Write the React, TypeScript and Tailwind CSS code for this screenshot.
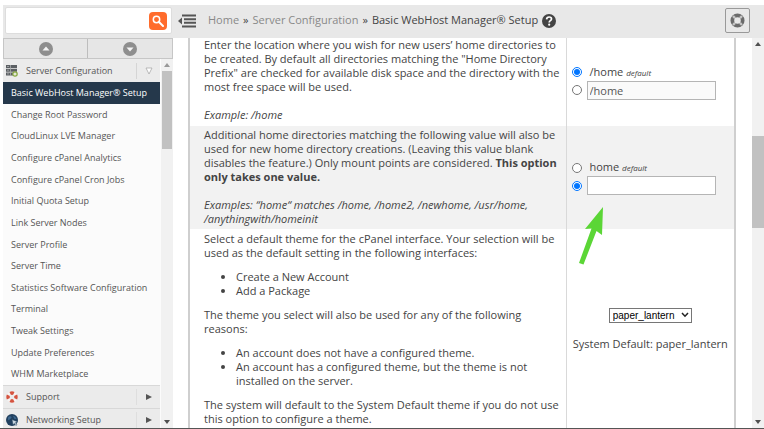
import { useState } from 'react';

const menuItems = [
  'Basic WebHost Manager® Setup',
  'Change Root Password',
  'CloudLinux LVE Manager',
  'Configure cPanel Analytics',
  'Configure cPanel Cron Jobs',
  'Initial Quota Setup',
  'Link Server Nodes',
  'Server Profile',
  'Server Time',
  'Statistics Software Configuration',
  'Terminal',
  'Tweak Settings',
  'Update Preferences',
  'WHM Marketplace',
];

function LifeRing({ className, color, gap }: { className: string; color: string; gap: string }) {
  return (
    <svg viewBox="0 0 16 16" className={className} aria-hidden="true">
      <circle cx="8" cy="8" r="5.5" fill="none" stroke={color} strokeWidth="4" />
      <path
        d="M3.2 3.2 5.4 5.4M12.8 3.2l-2.2 2.2M3.2 12.8l2.2-2.2M12.8 12.8l-2.2-2.2"
        stroke={gap}
        strokeWidth="2.6"
      />
    </svg>
  );
}

function SupportIcon() {
  return (
    <svg viewBox="0 0 12 12" className="size-3" aria-hidden="true">
      <circle cx="6" cy="6" r="4" fill="none" stroke="#f7f3f2" strokeWidth="3.6" />
      <circle
        cx="6"
        cy="6"
        r="4"
        fill="none"
        stroke="#d4533f"
        strokeWidth="3.4"
        pathLength="80"
        strokeDasharray="12 8"
        strokeDashoffset="6"
      />
    </svg>
  );
}

function ServerIcon() {
  return (
    <svg viewBox="0 0 12 12" className="size-3" aria-hidden="true">
      <path d="M0 0h11v3H0zM0 3.7h11v3H0zM0 7.4h11v3H0z" fill="#5b5f63" />
      <path d="M4.5 0v11M1 1.5h2M1 5.2h2M1 8.9h2" stroke="#a9adaf" strokeWidth=".8" />
      <circle cx="9" cy="9" r="2.2" fill="#e3e8d6" stroke="#86a83f" strokeWidth="1.2" />
    </svg>
  );
}

function GlobeIcon() {
  return (
    <svg viewBox="0 0 12 12" className="size-3" aria-hidden="true">
      <circle cx="6" cy="6" r="6" fill="#21405f" />
      <path d="M2 3.5c1.5-1.8 3-1.5 3.5-.5S4 5 3 6 2 5 2 3.5zM7 2c2 0 3 1.5 3.5 3l-2 0z" fill="#3d678e" />
      <path d="m6 5.5 5.5 2.2-2 1 1.5 2-1.2.8-1.5-2L7 11z" fill="#c9d6e0" stroke="#21405f" strokeWidth=".5" />
    </svg>
  );
}

function ScrollArrow({ down, className }: { down?: boolean; className: string }) {
  return (
    <svg viewBox="0 0 6 4" className={`h-1 w-1.5 ${className}`} aria-hidden="true">
      <path d={down ? 'M0 0h6L3 4z' : 'M0 4h6L3 0z'} fill="currentColor" />
    </svg>
  );
}

function Sidebar() {
  return (
    <nav className="flex w-[170px] shrink-0 flex-col bg-[#fbfbfb] text-[9px]">
      <div className="grid h-[21px] shrink-0 grid-cols-2 border border-[#c6c6c6] bg-[#e6e6e6]">
        <button type="button" aria-label="Collapse all" className="flex items-center justify-center border-r border-[#bdbdbd]">
          <svg viewBox="0 0 14 14" className="size-3.5">
            <circle cx="7" cy="7" r="7" fill="#8e8e8e" />
            <path d="M3.5 8.5h7L7 4.5z" fill="#f4f4f4" />
          </svg>
        </button>
        <button type="button" aria-label="Expand all" className="flex items-center justify-center">
          <svg viewBox="0 0 14 14" className="size-3.5">
            <circle cx="7" cy="7" r="7" fill="#8e8e8e" />
            <path d="M3.5 5.5h7L7 9.5z" fill="#f4f4f4" />
          </svg>
        </button>
      </div>
      <div className="flex min-h-0 flex-1">
        <div className="min-w-0 flex-1 overflow-hidden">
          <button type="button" className="flex h-[23px] w-full items-center bg-[#ebebeb] pl-[3px] text-[#555]">
            <ServerIcon />
            <span className="flex-1 pl-2 text-left">Server Configuration</span>
            <span className="flex h-4 w-6 items-center justify-center border-l border-[#d5d5d5]">
              <svg viewBox="0 0 8 8" className="size-2">
                <path d="M1 1h6L4 7z" fill="#fff" stroke="#aaa" strokeWidth=".8" />
              </svg>
            </span>
          </button>
          <ul className="grid h-[303px] auto-rows-fr whitespace-nowrap">
            {menuItems.map((item, i) => (
              <li key={item}>
                <a
                  href="#"
                  className={
                    i === 0
                      ? 'flex h-full items-center bg-[#25384b] pl-2 text-white'
                      : 'flex h-full items-center pl-2 text-[#555]'
                  }
                >
                  {item}
                </a>
              </li>
            ))}
          </ul>
          {['Support', 'Networking Setup'].map((label) => (
            <button
              key={label}
              type="button"
              className="flex h-[23px] w-full items-center border-t border-[#d8d8d8] bg-[#ebebeb] pl-[3px] text-[#555]"
            >
              {label === 'Support' ? <SupportIcon /> : <GlobeIcon />}
              <span className="flex-1 pl-2 text-left">{label}</span>
              <span className="flex h-4 w-6 items-center justify-center border-l border-[#dedede]">
                <svg viewBox="0 0 6 6" className="size-1.5">
                  <path d="M0 0v6l6-3z" fill="#555" />
                </svg>
              </span>
            </button>
          ))}
        </div>
        <div className="ml-px flex w-3 shrink-0 flex-col items-center bg-[#f1f1f1]">
          <ScrollArrow className="my-1 text-[#999]" />
          <div className="h-[78px] w-[10px] bg-[#c1c1c1]" />
          <ScrollArrow down className="mt-auto mb-1 text-[#505050]" />
        </div>
      </div>
    </nav>
  );
}

function PrefixField({ name, option, value, custom }: { name: string; option: string; value: string; custom: boolean }) {
  const [isCustom, setIsCustom] = useState(custom);
  const [text, setText] = useState(value);
  return (
    <div className="flex flex-col gap-px pl-[5px]">
      <label className="flex items-center gap-2">
        <input type="radio" name={name} checked={!isCustom} onChange={() => setIsCustom(false)} className="size-2.5" />
        <span>
          {option} <em className="text-[8px]">default</em>
        </span>
      </label>
      <div className="flex items-center gap-[5px]">
        <input
          type="radio"
          name={name}
          aria-label="Custom value"
          checked={isCustom}
          onChange={() => setIsCustom(true)}
          className="size-2.5"
        />
        <input
          type="text"
          aria-label={name}
          value={text}
          onChange={(e) => setText(e.target.value)}
          className={
            isCustom
              ? 'h-[19px] w-[129px] border border-[#b5b5b5] bg-white px-0.5'
              : 'h-[19px] w-[129px] border border-[#b5b5b5] bg-[#fafafa] px-0.5 text-[#555]'
          }
        />
      </div>
    </div>
  );
}

export default function App() {
  return (
    <div className="flex h-screen flex-col overflow-hidden border-b border-[#555] bg-white pt-[5px] pl-[3px] font-['Open_Sans',sans-serif]">
      <header className="flex h-[33px] shrink-0 items-center bg-[#e8e8e8] pr-3.5 pb-0.5 text-[11px]">
        <form className="mr-1.5 ml-0.5 flex h-[27px] w-[167px] shrink-0 items-center rounded-xs border border-[#ddd] bg-white pr-1">
          <input type="search" aria-label="Search" className="min-w-0 flex-1 px-2 outline-none" />
          <button type="button" aria-label="Search" className="flex size-[18px] items-center justify-center rounded bg-[#ff6c2c]">
            <svg viewBox="0 0 12 12" className="size-3" fill="none" stroke="#fff">
              <circle cx="4.5" cy="4.5" r="3.2" strokeWidth="1.5" />
              <path d="m7 7 4 4" strokeWidth="2" strokeLinecap="round" />
            </svg>
          </button>
        </form>
        <button type="button" aria-label="Toggle menu">
          <svg viewBox="0 0 18 14" className="h-3.5 w-[18px]">
            <path d="M4 1.5h14M6 5.2h12M6 8.8h12M4 12.5h14" stroke="#555" strokeWidth="2" />
            <path d="M4 3.5v7L0 7z" fill="#555" />
          </svg>
        </button>
        <div className="ml-3 flex flex-1 items-center gap-1 whitespace-nowrap text-[#444]">
          <a href="#" className="text-[#888]">Home</a>
          <span>»</span>
          <a href="#" className="text-[#888]">Server Configuration</a>
          <span>»</span>
          <span>Basic WebHost Manager® Setup</span>
          <button type="button" aria-label="Help">
            <svg viewBox="0 0 14 14" className="size-3.5">
              <circle cx="7" cy="7" r="7" fill="#444" />
              <path d="M4.6 5.4C4.7 3.8 5.7 3 7.1 3s2.4.8 2.4 2c0 1.7-2.3 1.7-2.3 3.5" fill="none" stroke="#fff" strokeWidth="1.7" />
              <circle cx="7.2" cy="10.7" r="1.1" fill="#fff" />
            </svg>
          </button>
        </div>
        <button type="button" aria-label="Support" className="flex size-[25px] items-center justify-center rounded-xs border border-[#999]">
          <LifeRing className="size-[15px]" color="#6b6b6b" gap="#c4c4c4" />
        </button>
      </header>

      <div className="flex min-h-0 flex-1">
        <Sidebar />
        <main className="min-w-0 flex-1 overflow-hidden pr-4 pl-[15px]">
          <table className="w-full table-fixed border-collapse border-x-2 border-[#cfcfcf] text-[11px] leading-[14px] text-[#444]">
            <colgroup>
              <col />
              <col className="w-[169px]" />
            </colgroup>
            <tbody>
              <tr className="h-[88px]">
                <td className="border-r border-[#d9d9d9] pb-1 pl-3.5 align-bottom">
                  <p>
                    Enter the location where you wish for new users’ home directories to be created. By default all
                    directories matching the "Home Directory Prefix" are checked for available disk space and the
                    directory with the most free space will be used.
                  </p>
                  <p className="mt-3.5 italic">Example: /home</p>
                </td>
                <td>
                  <PrefixField name="Home Directory Prefix" option="/home" value="/home" custom={false} />
                </td>
              </tr>
              <tr className="bg-[#f2f2f2]">
                <td className="border-r border-[#d9d9d9] pt-0.5 pb-[3px] pl-3.5 align-top">
                  <p>
                    Additional home directories matching the following value will also be used for new home directory
                    creations. (Leaving this value blank disables the feature.) Only mount points are considered.{' '}
                    <b>This option only takes one value.</b>
                  </p>
                  <p className="mt-3.5 italic">
                    Examples: “home“ matches /home, /home2, /newhome, /usr/home, /anythingwith/homeinit
                  </p>
                </td>
                <td className="relative">
                  <PrefixField name="Home Directory Prefix Match" option="home" value="" custom />
                  <svg viewBox="0 0 24 58" className="absolute top-[81px] left-3 h-[58px] w-6" aria-hidden="true">
                    <path d="M24 0 6 22l6.5-.5L0 56l4.5 1.5L17.5 24l5.5 4z" fill="#5bd636" />
                  </svg>
                </td>
              </tr>
              <tr>
                <td className="border-r border-[#d9d9d9] pt-[3px] pb-1 pl-3.5 align-top">
                  <div className="flex flex-col gap-2.5">
                    <p>
                      Select a default theme for the cPanel interface. Your selection will be used as the default
                      setting in the following interfaces:
                    </p>
                    <ul className="list-disc pl-8">
                      <li>Create a New Account</li>
                      <li>Add a Package</li>
                    </ul>
                    <p>The theme you select will also be used for any of the following reasons:</p>
                    <ul className="list-disc pl-8">
                      <li>An account does not have a configured theme.</li>
                      <li>An account has a configured theme, but the theme is not installed on the server.</li>
                    </ul>
                    <p>
                      The system will default to the System Default theme if you do not use this option to configure a
                      theme.
                    </p>
                  </div>
                </td>
                <td className="text-center">
                  <div className="relative mx-auto w-[83px]">
                    <select
                      aria-label="Default theme"
                      className="block h-[15px] w-full appearance-none border border-[#767676] bg-white pl-[3px] font-['Liberation_Sans',sans-serif] text-[10px] leading-[13px] text-black"
                    >
                      <option>paper_lantern</option>
                    </select>
                    <svg viewBox="0 0 8 6" className="pointer-events-none absolute top-1 right-[3px] h-1.5 w-2" aria-hidden="true">
                      <path d="m1 1 3 3.2L7 1" fill="none" stroke="#222" strokeWidth="1.5" />
                    </svg>
                  </div>
                  <p className="mt-3.5">System Default: paper_lantern</p>
                </td>
              </tr>
            </tbody>
          </table>
        </main>
        <div className="flex w-3 shrink-0 flex-col items-center bg-[#f1f1f1]">
          <ScrollArrow className="mt-1 text-[#505050]" />
          <div className="mt-[90px] h-[92px] w-full bg-[#c1c1c1]" />
          <ScrollArrow down className="mt-auto mb-1 text-[#505050]" />
        </div>
      </div>
    </div>
  );
}
